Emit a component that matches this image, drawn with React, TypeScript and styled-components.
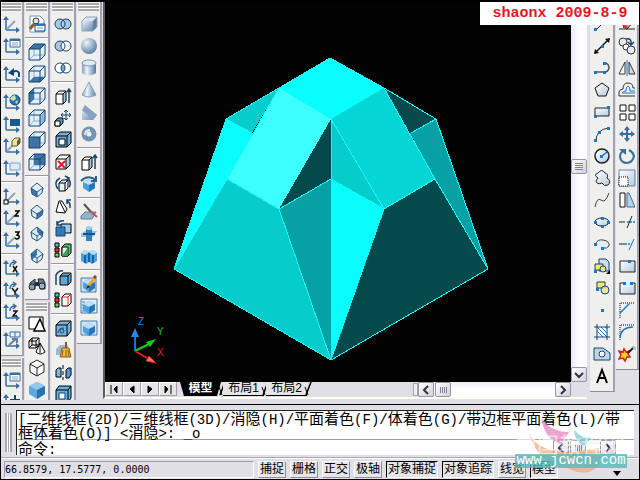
import React from "react";
import styled, { createGlobalStyle } from "styled-components";

const ink = "#17456f";
const blue = "#3a6d9f";
const sky = "#4aa3e0";

const GlobalStyle = createGlobalStyle`
  * { box-sizing: border-box; }
  body { margin: 0; background: #e0dfe6; }
  button { font: inherit; color: inherit; margin: 0; }
`;

const Page = styled.div`
  position: relative;
  display: flex;
  flex-direction: column;
  height: 100vh;
  overflow: hidden;
  background: #e0dfe6;
  border: solid #000;
  border-width: 2px 1px 1px;
  font-family: "Liberation Sans", "Noto Sans CJK SC", sans-serif;
  font-size: 12px;
  color: #000;
`;

const Workspace = styled.main`
  display: flex;
  flex: 1;
  min-height: 0;
  overflow: hidden;
`;

const Dock = styled.div<{ $right?: boolean }>`
  display: flex;
  flex: none;
  gap: 1px;
  padding-left: ${(p) => (p.$right ? 3 : 0)}px;
`;

const DockColumn = styled.div<{ $width: number }>`
  display: flex;
  flex-direction: column;
  gap: 2px;
  width: ${(p) => p.$width}px;
`;

const Bar = styled.div`
  flex: none;
  display: flex;
  flex-direction: column;
  padding-bottom: 4px;
  background: #efefed;
  border-right: 2px solid #a3a0b1;
  border-bottom: 1px solid #8f8c9c;
`;

const Grip = styled.div`
  height: 8px;
  margin: 1px 1px 2px;
  border: solid #a9a9ab;
  border-width: 2px 0;
  background: linear-gradient(#fff 0 1px, #a9a9ab 1px 3px, #fff 3px);
`;

const Tool = styled.button`
  display: flex;
  align-items: center;
  justify-content: center;
  height: 22px;
  padding: 0;
  border: 0;
  background: none;
`;

const Rule = styled.hr`
  width: 100%;
  height: 2px;
  margin: 2px 0;
  border: 0;
  border-top: 1px solid #98989c;
  border-bottom: 1px solid #fff;
`;

const Drawing = styled.section`
  display: flex;
  flex: 1;
  min-width: 0;
  margin-left: 1px;
  margin-bottom: 1px;
  border-left: 2px solid #5b5b5b;
  border-bottom: 2px solid #fffff6;
`;

const Canvas = styled.div`
  display: flex;
  flex-direction: column;
  flex: 1;
  min-width: 0;
`;

const Model = styled.svg`
  display: block;
  flex: 1;
  width: 100%;
  min-height: 0;
  background: #030203;
`;

const Sheets = styled.nav`
  display: flex;
  align-items: flex-start;
  height: 15px;
`;

const SheetSteps = styled.div`
  display: flex;
  margin-right: 3px;
`;

const SheetStep = styled.button`
  width: 18px;
  height: 14px;
  padding: 0;
  display: flex;
  align-items: center;
  justify-content: center;
  background: #e6e5e6;
  border: 1px solid;
  border-color: #fff #a09ead #a09ead #fff;
`;

const SheetTab = styled.button<{ $active?: boolean }>`
  width: 41px;
  height: 14px;
  padding: 0;
  border: 0;
  border-bottom: 1px solid #000;
  line-height: 13px;
  font-size: 12px;
  white-space: nowrap;
  font-weight: ${(p) => (p.$active ? 700 : 400)};
  color: ${(p) => (p.$active ? "#fff" : "#000")};
  background: ${(p) => (p.$active ? "#000" : "#e6e5e6")};
  clip-path: ${(p) => (p.$active ? "polygon(0 0, 100% 0, calc(100% - 4px) 100%, 4px 100%)" : "none")};
`;

const TabEdge = styled.svg`
  flex: none;
  margin: 0 -3px;
`;

const ScrollRow = styled.div`
  display: flex;
  align-items: center;
  margin-left: auto;
  width: 158px;
  height: 15px;
`;

const Splitter = styled.div`
  width: 5px;
  height: 13px;
  border: 1px solid #a9a6b4;
  background: #efeeea;
`;

const Track = styled.div<{ $vertical?: boolean }>`
  display: flex;
  flex: 1;
  align-self: stretch;
  flex-direction: ${(p) => (p.$vertical ? "column" : "row")};
  justify-content: ${(p) => (p.$vertical ? "center" : "flex-start")};
  background: ${(p) => (p.$vertical ? "linear-gradient(90deg, #e9e8f2, #fdfdff 50%)" : "linear-gradient(#eeedf4, #fff 50%)")};
  padding: ${(p) => (p.$vertical ? "0 0 37px" : "0 1px")};
`;

const ScrollButton = styled.button`
  flex: none;
  display: flex;
  align-items: center;
  justify-content: center;
  width: 16px;
  height: 15px;
  padding: 0;
  border: 1px solid #9896a7;
  border-radius: 2px;
  background: linear-gradient(135deg, #fff, #d0cfdc);
`;

const VerticalScroll = styled.div`
  display: flex;
  flex-direction: column;
  width: 16px;
  flex: none;
  padding-bottom: 15px;
`;

const CommandPanel = styled.section`
  flex: none;
  display: flex;
  margin-top: 4px;
  padding: 5px 5px 2px 4px;
  border-top: 1px solid #000;
  border-bottom: 1px solid #aaa8b3;
`;

const CommandGrip = styled.div`
  width: 7px;
  margin: 3px 4px 3px 0;
  border: solid #a9a8b0;
  border-width: 0 2px;
  background: linear-gradient(90deg, #fff 0 1px, #a9a8b0 1px 2px, #fff 2px);
`;

const CommandText = styled.div`
  flex: 1;
  min-width: 0;
  border: solid #222;
  border-width: 1px 0 0 1px;
  background: #fff;
  font: 15px/14px "Noto Sans CJK SC", sans-serif;
`;

const History = styled.output`
  display: block;
  padding-left: 1px;
  word-break: break-all;
`;

const Latin = styled.span`
  font: 14px/1px "Liberation Mono", monospace;
`;

const Prompt = styled.label`
  display: flex;
  align-items: center;
  height: 16px;
  padding-left: 1px;
  border-top: 1px solid #a09fa6;
`;

const PromptInput = styled.input`
  flex: 1;
  min-width: 0;
  height: 14px;
  padding: 0;
  border: 0;
  outline: 0;
  background: none;
  font: 14px/14px "Liberation Mono", monospace;
`;

const PromptScroll = styled.div`
  display: flex;
  width: 63px;
  margin-right: 18px;
`;

const Status = styled.footer`
  flex: none;
  display: flex;
  align-items: center;
  gap: 4px;
  height: 21px;
  padding: 0 3px;
  border-top: 1px solid #fff;
`;

const Coordinates = styled.output`
  width: 250px;
  min-width: 0;
  height: 17px;
  border: 1px solid;
  border-color: #a09ead #fff #fff #a09ead;
  font: 10px/15px "DejaVu Sans Mono", monospace;
  white-space: nowrap;
`;

const Mode = styled.button<{ $on?: boolean }>`
  flex: none;
  height: 17px;
  padding: 0 1px;
  border: 1px solid;
  border-color: ${(p) => (p.$on ? "#000 #fff #fff #000" : "#fff #8f8d9b #8f8d9b #fff")};
  background: #e6e5e8;
  font-size: 12px;
  line-height: 15px;
`;

const StatusMenu = styled.button`
  margin-left: auto;
  margin-right: 15px;
  padding: 6px 0 0;
  border: 0;
  background: none;
`;

const Stamp = styled.div`
  position: absolute;
  top: -2px;
  right: -1px;
  width: 160px;
  height: 25px;
  background: #fff;
  color: #e8141c;
  text-align: center;
  font: bold 15px/28px "Liberation Mono", monospace;
`;

const Watermark = styled.div`
  position: absolute;
  right: 12px;
  bottom: 11px;
  width: 112px;
  height: 52px;
  pointer-events: none;
`;

const Swoosh = styled.svg`
  display: block;
  position: absolute;
  top: 0;
  left: 0;
`;

const SiteName = styled.div`
  position: absolute;
  top: 15px;
  left: 0;
  color: #ffffffa0;
  font: 22px/24px "Noto Sans CJK SC", sans-serif;
  white-space: nowrap;
`;

const SiteLink = styled.a`
  position: absolute;
  left: 0;
  right: 0;
  bottom: 0;
  height: 14px;
  background: #55bcbcd0;
  color: #fff;
  text-decoration: none;
  text-align: center;
  font: 14px/13px "Liberation Mono", monospace;
`;

type Face = "top" | "bottom" | "left" | "right" | "front" | "back";
const faces: Record<Face, string> = {
  top: "1,6 6,1 17,1 12,6",
  bottom: "1,17 6,12 17,12 12,17",
  left: "1,6 6,1 6,12 1,17",
  right: "12,6 17,1 17,12 12,17",
  front: "1,6 12,6 12,17 1,17",
  back: "6,1 17,1 17,12 6,12",
};

const viewCube = (face: Face) => (
  <>
    <path d="M1 6L6 1H17V12L12 17H1Z" fill="#e3eff7" />
    <path d="M6 1V12H17M6 12L1 17" stroke="#8cb0cf" fill="none" />
    <polygon points={faces[face]} fill={face === "right" ? "#8dbbe0" : "#3c73a8"} />
    <path d="M1 6L6 1H17V12L12 17H1ZM1 6H12V17M12 6L17 1" fill="none" stroke={ink} />
  </>
);

const isoCube = (fill: string) => (
  <>
    <path d="M9 2L15 7L14 12L9 16L4 13L3 7Z" fill="#dcebf5" />
    <polygon points={fill} fill="#3d77ad" />
    <path d="M9 2L15 7L14 12L9 16L4 13L3 7ZM3 7L9 11L15 7M9 11V16" fill="none" stroke="#24577f" />
  </>
);

const box = (
  <>
    <path d="M2 6L6 2H16V12L12 16H2Z" fill="#fff" />
    <path d="M12 6L16 2V12L12 16Z" fill="#a9cce8" />
    <path d="M2 6L6 2H16V12L12 16H2ZM2 6H12V16M12 6L16 2" fill="none" stroke="#000" />
  </>
);

const smallBox = (
  <>
    <path d="M2 7L5 4H12V14L9 17H2Z" fill="#fff" />
    <path d="M9 7L12 4V14L9 17Z" fill="#9ec5e4" />
    <path d="M2 7L5 4H12V14L9 17H2ZM2 7H9V17M9 7L12 4" fill="none" stroke="#000" />
  </>
);

const blueBox = (
  <>
    <path d="M3 7L9 4L15 7V13L9 17L3 13Z" fill={sky} />
    <path d="M3 7L9 4L15 7L9 10Z" fill="#bfe0f8" />
    <path d="M9 10L15 7V13L9 17Z" fill="#2577b8" />
  </>
);

const axes = (
  <>
    <path d="M3 15V4M3 15H15" stroke={blue} strokeWidth="1.5" fill="none" />
    <path d="M3 1L6 5H0ZM17 15L13 12V18Z" fill={blue} />
  </>
);
const axesDiagonal = (
  <>
    {axes}
    <path d="M4 14L12 6" stroke="#8da6bd" strokeWidth="2" />
  </>
);

const windowMark = (
  <>
    <path d="M7 2H17V10H7Z" fill="#fff" stroke={blue} />
    <path d="M7 2H17V4H7Z" fill={blue} />
    <path d="M9 6H15M9 8H15" stroke="#80a3c3" />
  </>
);

const curl = <path d="M7 8Q7 3 12 3M10 1L13 3L10 6" fill="none" stroke={blue} strokeWidth="1.5" />;

const ring = (left: string, mid: string, right: string) => (
  <>
    <circle cx="6" cy="9" r="5" fill={left} />
    <circle cx="12" cy="9" r="5" fill={right} />
    <path d="M9 5Q5 9 9 13Q13 9 9 5Z" fill={mid} />
    <circle cx="6" cy="9" r="5" fill="none" stroke={ink} />
    <circle cx="12" cy="9" r="5" fill="none" stroke={ink} />
  </>
);

const dot = (x: number, y: number) => <rect x={x} y={y} width="3" height="3" fill="#1678c8" />;

const swatches = (
  <>
    <path d="M1 2H5V6H1Z" fill="#50b9c8" stroke="#000" />
    <path d="M1 7H5V11H1Z" fill="#e33" stroke="#000" />
    <path d="M1 12H5V16H1Z" fill="#7bc06c" stroke="#000" />
  </>
);

const glyphs: Record<string, React.ReactNode> = {
  ucs: axesDiagonal,
  ucsWindow: <>{axes}{windowMark}</>,
  ucsPrevious: <>{axes}<path d="M16 12V8Q14 4 8 8" stroke={ink} strokeWidth="2" fill="none" /><path d="M5 8L11 3V11Z" fill={ink} /></>,
  ucsWorld: <>{axes}<circle cx="12" cy="7" r="5" fill="#2c73ad" stroke={ink} /><path d="M9 3L12 2L13 6L10 8L7 6ZM12 9L15 7L14 11Z" fill="#c4e0c0" /></>,
  ucsObject: <>{axes}<path d="M7 4H17V11H7Z" fill="#19598c" /></>,
  ucsFace: <>{axesDiagonal}<path d="M9 4L12 1H17V6L14 9H9Z" fill="#efe598" stroke="#625b32" /><path d="M14 4L17 1V6L14 9Z" fill="#625b32" /></>,
  ucsView: <>{axes}<path d="M7 4H17V11H7Z" fill="#dcebf7" stroke="#7ba4c8" /></>,
  ucsOrigin: <>{axesDiagonal}<rect x="1" y="13" width="4" height="4" fill="#fff" stroke="#000" /></>,
  ucsZ: <>{axesDiagonal}<path d="M12 2H16L12 7H16" stroke="#000" strokeWidth="1.5" fill="none" /></>,
  ucs3: <>{axesDiagonal}<path d="M12 1H16L14 4Q17 4 16 7Q14 9 12 7" stroke="#000" strokeWidth="1.5" fill="none" /></>,
  rotX: <>{axes}{curl}<path d="M10 7L14 13M14 7L10 13" stroke="#111" strokeWidth="1.5" /></>,
  rotY: <>{axes}{curl}<path d="M9 7L12 11L15 7M12 11V14" stroke="#111" strokeWidth="1.5" fill="none" /></>,
  rotZ: <>{axes}{curl}<path d="M10 8H14L10 13H14" stroke="#111" strokeWidth="1.5" fill="none" /></>,
  ucsApply: <>{axes}<path d="M7 1H17V6H7ZM12 1V6" fill="#e5f0f8" stroke={blue} /><path d="M6 14L13 8M9 8H14V12" stroke="#62809d" strokeWidth="2" fill="none" /></>,
  ucsMove: <>{axes}<path d="M12 2V12M7 7H17" stroke={ink} strokeWidth="2" /></>,

  namedViews: <><path d="M2 1H12L16 5V17H2Z" fill="#fff" stroke="#7196b8" /><circle cx="8" cy="6" r="3" fill="#d3e4ef" stroke="#333" /><path d="M6 9L2 14" stroke="#8d5f26" strokeWidth="3" /><path d="M7 9H17V16H7Z" fill="#fff" stroke={ink} /><path d="M7 9H17V11H7Z" fill="#2873b9" /><path d="M9 13H15" stroke="#6f96ba" /></>,
  top: viewCube("top"),
  bottom: viewCube("bottom"),
  left: viewCube("left"),
  right: viewCube("right"),
  front: viewCube("front"),
  back: viewCube("back"),
  sw: isoCube("3,7 9,11 9,16 4,13"),
  se: isoCube("15,7 9,11 9,16 14,12"),
  ne: isoCube("9,2 15,7 14,12 9,7"),
  nw: isoCube("9,2 3,7 4,13 9,8"),
  camera: <><path d="M2 8L7 4V14H2ZM10 4H15L17 8V14H12Z" fill="#67788a" stroke="#20282f" /><circle cx="4" cy="12" r="3" fill="#8c9cab" stroke="#20282f" /><circle cx="14" cy="11" r="3" fill="#9fb5c7" stroke="#20282f" /><path d="M7 7H11V11H7Z" fill="#283038" /></>,
  wire2d: <><path d="M1 2H15V14H1Z" fill="#fff" stroke="#000" /><path d="M12 4L17 16H6Z" fill="#fff" stroke="#000" strokeWidth="1.5" /></>,
  wire3d: <><path d="M1 4L4 1H11V8L8 11H1ZM1 4H8V11M8 4L11 1M4 1V8H11M4 8L1 11" fill="none" stroke="#000" /><path d="M12 6L17 15Q12 19 8 15ZM12 6V16" fill="#fff" stroke="#000" /></>,
  hidden: <path d="M9 1L16 5V13L9 17L2 13V5ZM2 5L9 9L16 5M9 9V17" fill="#fff" stroke="#222" />,
  flat: <><path d="M1 5L9 1L17 5V13L9 18L1 13Z" fill="#62a7db" /><path d="M1 5L9 1L17 5L9 9Z" fill="#94c8ed" /><path d="M9 9L17 5V13L9 18Z" fill="#2774ae" /></>,

  union: ring("#a8c9e1", "#a8c9e1", "#a8c9e1"),
  subtract: ring("#a8c9e1", "#fff", "#fff"),
  intersect: ring("#fff", "#7ba8cc", "#fff"),
  extrudeFace: <>{smallBox}<path d="M15 16V3M13 5L15 2L17 5" stroke={ink} strokeWidth="1.5" fill="none" /></>,
  moveFace: <><path d="M1 12L4 9H9V14L6 17H1Z" fill="#4f9ad2" stroke="#000" /><path d="M1 12H6V17H1Z" fill="#fff" stroke="#000" /><path d="M12 1V11M7 6H17M10 3L12 1L14 3M10 9L12 11L14 9M9 4L7 6L9 8M15 4L17 6L15 8" stroke={ink} fill="none" /></>,
  offsetFace: <><path d="M2 5L6 1H17V12L13 16H2Z" fill="#72acd9" stroke="#000" /><path d="M2 5H13V16M13 5L17 1" fill="none" stroke="#000" /><path d="M5 8H11V14H5Z" fill="#fff" stroke="#000" /></>,
  deleteFace: <>{box}<path d="M4 8L11 15M11 8L4 15" stroke="#e31b23" strokeWidth="2" /></>,
  rotateFace: <><path d="M5 8L8 5H14V13L11 16H5Z" fill="#e3eef6" stroke="#000" /><path d="M5 8H11V16M11 8L14 5" fill="none" stroke="#000" /><path d="M4 14Q-1 7 6 3M14 3Q18 8 15 12M11 1L15 3L12 5" stroke={ink} strokeWidth="1.5" fill="none" /></>,
  taperFace: <><path d="M2 15L5 4H8L13 12L11 16Z" fill="#fff" stroke="#000" /><path d="M6 5L11 15" stroke="#000" /><path d="M16 11Q17 6 13 4M13 7V3H17" stroke={ink} strokeWidth="1.5" fill="none" /></>,
  copyFace: <><path d="M7 5H17V14H7Z" fill="#9cc9eb" stroke="#000" /><path d="M2 8H11V17H2Z" fill="#337ab8" stroke={ink} /><path d="M3 6Q5 1 10 2M3 2V6H7" stroke={ink} strokeWidth="1.5" fill="none" /></>,
  colorFace: <>{swatches}<path d="M8 6L11 3H17V12L14 15H8Z" fill="#5ac47c" stroke="#000" /><path d="M8 6H14V15H8Z" fill="#dff2e4" stroke="#000" /><path d="M14 6V15H8Z" fill="#30a558" /></>,
  copyEdge: <><path d="M6 7L9 4H17V13L14 16H6Z" fill="#61a7de" stroke="#000" /><path d="M6 7H14V16M14 7L17 4" stroke="#000" fill="none" /><path d="M2 16V6Q5 1 9 2" stroke={ink} strokeWidth="1.5" fill="none" /></>,
  colorEdge: <>{swatches}<path d="M8 6L11 3H17V12L14 15H8Z" fill="#fff" stroke="#000" /><path d="M8 6H14V15M14 6L17 3" fill="none" stroke="#e31b23" /></>,
  imprint: <><path d="M2 6L6 2H17V12L13 17H2Z" fill="#77b2de" stroke="#000" /><path d="M2 6H13V17M13 6L17 2" stroke="#000" fill="none" /><path d="M4 14Q4 9 10 9" stroke={ink} fill="none" /><circle cx="8" cy="12" r="2" fill="none" stroke={ink} /></>,
  clean: <><path d="M2 8L6 4H14V14H2Z" fill="#9ab9d5" /><path d="M11 1H13V7H11Z" fill="#8c5624" /><path d="M8 7H15L17 16H6Z" fill="#edb641" stroke="#936018" /><path d="M9 9L8 16M12 9V16M14 9L15 16" stroke="#936018" /></>,
  separate: <><path d="M2 7L4 5H7V14H2Z" fill="#81b7e0" stroke="#000" /><path d="M12 7L14 5H17V12L15 15H12Z" fill="#4f9bd5" stroke="#000" /><path d="M9 2V6M9 8V12M9 14V17" stroke="#000" /></>,
  shell: <><path d="M2 5L5 1H17V13L14 17H2Z" fill="#65aee6" stroke="#000" /><path d="M2 5H14V17M14 5L17 1" stroke="#000" fill="none" /><path d="M5 8H11V14H5Z" fill="#fff" stroke={ink} /></>,

  box: <><path d="M2 6L6 2H17V12L13 16H2Z" fill="#5d7fa3" /><path d="M2 6L6 2H17L13 6Z" fill="#d9e6f1" /><path d="M2 6H13V16H2Z" fill="url(#steel)" /><path d="M2 6L6 2H17V12L13 16H2Z" stroke="#8ba5bf" fill="none" /></>,
  sphere: <circle cx="9" cy="9" r="8" fill="url(#ball)" />,
  cylinder: <><path d="M2 4V14Q9 19 16 14V4Z" fill="url(#tube)" /><ellipse cx="9" cy="4" rx="7" ry="3" fill="#e0ebf4" stroke="#7895b2" /></>,
  cone: <path d="M9 1L16 14Q9 18 2 14Z" fill="url(#tube)" stroke="#8aa4bd" />,
  wedge: <><path d="M2 7L5 2L17 12L13 17H2Z" fill="url(#steel)" /><path d="M2 7L5 2L17 12L13 17Z" fill="#86a3c0" /></>,
  torus: <><circle cx="9" cy="9" r="5" fill="none" stroke="#7393b4" strokeWidth="5" /><path d="M5 10Q5 5 10 5" fill="none" stroke="#e5eff7" strokeWidth="2" /></>,
  extrude: <>{smallBox}<path d="M15 16V3M13 5L15 2L17 5" stroke={ink} strokeWidth="1.5" fill="none" /></>,
  revolve: <>{blueBox}<path d="M1 6Q8 -1 16 5M16 1V6H11" stroke="#246291" fill="none" strokeWidth="2" /></>,
  slice: <><path d="M1 13L5 9H16L12 16H1Z" fill="#96b2cc" stroke="#5e7f9f" /><path d="M4 1L11 9" stroke="#555" strokeWidth="2" /><path d="M10 8L17 14" stroke="#c05050" strokeWidth="2" /></>,
  section: <><path d="M1 9L5 6H17L13 12H1Z" fill="#8cc2e8" /><path d="M6 2H12V16H6Z" fill="#2c80bf" /><ellipse cx="9" cy="3" rx="3" ry="2" fill="#9ed0f2" /><path d="M3 9H15" stroke="#145589" strokeWidth="2" /></>,
  interfere: <><path d="M1 6L5 3L9 5L13 3L17 6V14L12 17L9 15L6 17L1 14Z" fill={sky} /><path d="M5 8V16M9 6V15M13 8V16" stroke="#1563a0" strokeWidth="2" /><path d="M1 6L5 3L9 5L5 8ZM9 5L13 3L17 6L13 8Z" fill="#b8def6" /></>,
  setDraw: <><path d="M1 3H16V17H1Z" fill="#cde2f2" stroke="#4f7da5" />{blueBox}<path d="M8 11L15 3" stroke="#eda72e" strokeWidth="3" /><path d="M14 3L16 1" stroke="#7d4b24" strokeWidth="3" /><path d="M6 14L8 10L10 12Z" fill="#222" /></>,
  setView: <><path d="M1 2H17V16H1Z" fill="#e1edf6" stroke="#4f7da5" /><path d="M2 5H5M2 8H5M2 11H5M2 14H5" stroke="#4f7da5" />{blueBox}</>,
  setProfile: <><path d="M1 2H17V16H1Z" fill="#d2e4f2" stroke="#4f7da5" />{blueBox}</>,

  line: <><path d="M3 15L15 3" stroke="#222" />{dot(1, 13)}{dot(13, 2)}</>,
  ray: <><path d="M2 16L16 2" stroke="#111" strokeWidth="1.5" /><path d="M1 17L2 12L6 16ZM17 1L12 2L16 6Z" fill="#111" />{dot(8, 8)}</>,
  pline: <><path d="M3 13H12M11 4Q16 4 16 9Q15 13 12 13" stroke="#555" fill="none" strokeWidth="1.5" />{dot(1, 12)}{dot(10, 12)}{dot(10, 3)}</>,
  polygon: <path d="M9 2L16 7L13 15H5L2 7Z" fill="url(#fade)" stroke="#111" />,
  rect: <><path d="M2 5H16V13H2Z" fill="url(#fade)" stroke="#222" />{dot(1, 12)}{dot(14, 3)}</>,
  arc: <><path d="M3 16Q3 5 15 3" stroke="#333" fill="none" />{dot(1, 14)}{dot(5, 6)}{dot(14, 2)}</>,
  circle: <><circle cx="9" cy="9" r="7" fill="url(#fade)" stroke="#222" strokeWidth="1.5" /><path d="M9 9L14 5" stroke="#1678c8" strokeWidth="1.5" />{dot(7, 8)}</>,
  cloud: <path d="M5 4Q9 -1 12 4Q16 5 14 9Q19 12 15 16Q11 18 9 14Q4 16 3 12Q4 10 5 9Q0 6 5 4Z" fill="url(#fade)" stroke="#222" />,
  spline: <path d="M2 16Q4 6 8 9Q12 13 16 2" stroke="#444" fill="none" />,
  ellipse: <><ellipse cx="9" cy="9" rx="7" ry="4" fill="url(#fade)" stroke="#222" />{dot(1, 8)}{dot(14, 8)}{dot(8, 4)}{dot(8, 12)}</>,
  ellipseArc: <><path d="M3 9Q4 4 10 5Q17 6 16 11Q14 14 10 13" fill="#e5edf4" stroke="#444" />{dot(1, 8)}{dot(8, 12)}</>,
  insert: <><path d="M6 2H13L16 5V14H6Z" fill="#cbdfee" stroke={ink} /><path d="M2 7H10V13H2Z" fill="#f4e96c" stroke={ink} /><circle cx="10" cy="12" r="3" fill="#e3e788" stroke={ink} /><path d="M13 17H17V13Z" fill="#000" />{dot(1, 13)}</>,
  block: <><path d="M4 3H12V9H4Z" fill="#f4e96c" stroke={ink} /><circle cx="12" cy="11" r="4" fill="#e3e788" fillOpacity=".8" stroke={ink} />{dot(3, 9)}</>,
  point: dot(8, 8),
  hatch: <><path d="M4 4H14V14H4Z" fill="#fff" /><path d="M4 8L10 14M4 4L14 14M8 4L14 10M12 4L14 6" stroke="#2878b4" /><path d="M4 1V17M14 1V17M1 4H17M1 14H17" stroke={ink} /></>,
  region: <><path d="M1 3H10L17 8V15H1Z" fill="#bcd4e8" stroke={ink} /><circle cx="9" cy="9" r="3" fill="#fff" stroke={ink} /></>,
  text: <path d="M4 16L9 3L14 16M5 11H13" stroke="#000" strokeWidth="2" fill="none" />,

  erase: <><path d="M1 14H17" stroke="#222" /><path d="M5 12L14 2L17 5L9 14Z" fill="#a6bed1" stroke="#222" /><path d="M4 10L7 8L10 12L8 14Z" fill="#e33" /></>,
  copy: <><circle cx="5" cy="5" r="4" fill="#e4edf4" stroke="#333" /><circle cx="8" cy="10" r="3" fill="#fff" stroke="#333" /><circle cx="13" cy="13" r="4" fill="#e4edf4" stroke="#333" /><path d="M8 2Q14 1 13 7M10 5L13 8L16 5" stroke={ink} strokeWidth="1.5" fill="none" /></>,
  mirror: <><path d="M7 3V15H1Z" fill="#fff" stroke="#333" /><path d="M11 3V15H17Z" fill="#cfdce7" stroke="#333" /><path d="M9 1V17" stroke="#1678c8" /></>,
  offset: <><path d="M17 15H1V11Q2 8 5 8Q5 2 10 2Q15 2 15 7H17" stroke="#333" fill="none" /><path d="M17 12H4Q5 10 8 10Q8 5 10 5Q12 5 12 10H17" stroke="#1678c8" fill="none" /></>,
  array: <path d="M2 2H8V8H2ZM11 2H17V8H11ZM2 11H8V17H2ZM11 11H17V17H11Z" fill="#fff" stroke="#111" />,
  move: <><path d="M9 2V16M2 9H16" stroke={blue} strokeWidth="2" /><path d="M9 1L12 5H6ZM9 17L12 13H6ZM1 9L5 6V12ZM17 9L13 6V12Z" fill={blue} /></>,
  rotate: <><path d="M5 4Q2 6 2 10Q3 16 9 16Q15 15 16 9Q15 5 11 3" stroke={blue} strokeWidth="2" fill="none" /><path d="M1 2H8V8Z" fill={blue} /></>,
  scale: <><path d="M1 1H17V17H1Z" fill="url(#fade)" stroke="#5b89b2" /><path d="M1 8H10V17H1Z" fill="#fff" stroke="#000" strokeDasharray="1 1" /></>,
  stretch: <><path d="M2 2H7V16H2Z" fill="#fff" stroke="#111" /><path d="M9 2V16H17L11 2Z" fill="#bbd1e4" stroke={blue} /></>,
  trim: <><path d="M1 9H7M9 15L14 3" stroke="#222" /><path d="M9 9H17" stroke="#1678c8" strokeWidth="1.5" strokeDasharray="2 1" /></>,
  extend: <><path d="M1 9H7" stroke="#222" /><path d="M11 15L16 4" stroke="#1678c8" /><path d="M7 9H14" stroke="#1678c8" strokeWidth="1.5" strokeDasharray="2 1" /></>,
  breakPoint: <><path d="M2 4H17V15H2Z" fill="url(#fade)" stroke="#222" />{dot(10, 3)}</>,
  breakTwo: <><path d="M6 4H2V15H17V4H13" fill="url(#fade)" stroke="#222" />{dot(5, 3)}{dot(12, 3)}</>,
  chamfer: <><path d="M2 17V2H17" stroke="#000" strokeDasharray="1 1" fill="none" /><path d="M2 12L11 3" stroke="#1678c8" strokeWidth="1.5" /></>,
  fillet: <><path d="M2 17V2H17" stroke="#000" strokeDasharray="1 1" fill="none" /><path d="M2 15Q3 4 15 4" stroke="#1678c8" strokeWidth="1.5" fill="none" /></>,
  explode: <><path d="M6 4L8 7L11 6L10 9L12 12L9 12L7 16L5 13L1 14L3 10L1 6L5 7Z" fill="#f2cf27" stroke="#c92820" strokeWidth="1.5" /><path d="M10 8L15 3" stroke="#222" strokeWidth="2" /><path d="M14 2H17V5" stroke="#73a3ca" fill="none" /></>,
};

const Glyph = ({ name }: { name: string }) => (
  <svg width="18" height="18" viewBox="0 0 18 18" fill="none" aria-hidden="true">
    {glyphs[name]}
  </svg>
);

const ToolBar = ({ label, items }: { label: string; items: string }) => (
  <Bar role="toolbar" aria-label={label}>
    <Grip />
    {items.split(" ").map((item, i) =>
      item === "|" ? (
        <Rule key={i} />
      ) : (
        <Tool key={i} aria-label={item}>
          <Glyph name={item} />
        </Tool>
      )
    )}
  </Bar>
);

const chevrons = {
  left: "M7 1L3 5L7 9",
  right: "M3 1L7 5L3 9",
  down: "M1 3L5 7L9 3",
};

const Arrow = ({ to }: { to: keyof typeof chevrons }) => (
  <ScrollButton aria-label={`scroll ${to}`}>
    <svg width="10" height="10" viewBox="0 0 10 10">
      <path d={chevrons[to]} fill="none" stroke="#333" strokeWidth="2" />
    </svg>
  </ScrollButton>
);

const Thumb = ({ vertical }: { vertical?: boolean }) => (
  <ScrollButton aria-label="scroll thumb">
    <svg width="8" height="8" viewBox="0 0 8 8">
      <path
        d={vertical ? "M0 1H8M0 3H8M0 5H8M0 7H8" : "M1 1V7M3 1V7M5 1V7M7 1V7"}
        stroke="#8582a0"
        shapeRendering="crispEdges"
      />
    </svg>
  </ScrollButton>
);

const Mixed = ({ text }: { text: string }) => (
  <>
    {text.split(/([^\u4e00-\u9fff]+)/).map((part, i) => (i % 2 ? <Latin key={i}>{part}</Latin> : part))}
  </>
);

const steps: [string, string][] = [
  ["first", "M2 0V9M8 1V8L5 4Z"],
  ["previous", "M7 1V8L3 4Z"],
  ["next", "M3 1V8L7 4Z"],
  ["last", "M8 0V9M2 1V8L5 4Z"],
];

const Edge = () => (
  <TabEdge width="8" height="14" viewBox="0 0 8 14">
    <path d="M7 0L2 13" stroke="#000" strokeWidth="1.5" />
    <path d="M1 5L4 13" stroke="#000" />
  </TabEdge>
);

const solid: [string, string][] = [
  ["279,88 226,119 252,133", "#06cccc"],
  ["226,119 253,133 228,179 174,269", "#08fdfd"],
  ["384,88 436,119 410,133", "#044a4c"],
  ["436,119 410,133 435,179 488,269", "#05a1a4"],
  ["330,58 384,88 331,119 279,88", "#08fdfd"],
  ["279,88 331,119 279,209 227,179", "#3dffff"],
  ["384,88 435,179 384,209 331,119", "#06d5d5"],
  ["331,119 331,179 279,209", "#044a4c"],
  ["331,119 384,209 331,179", "#06cccc"],
  ["227,179 279,209 331,360 174,269", "#06cccc"],
  ["279,209 331,179 331,360", "#05a1a4"],
  ["331,179 384,209 331,360", "#08fdfd"],
  ["384,209 435,179 488,269 331,360", "#044a4c"],
];

const modes: [string, boolean][] = [
  ["捕捉", false],
  ["栅格", false],
  ["正交", false],
  ["极轴", false],
  ["对象捕捉", true],
  ["对象追踪", true],
  ["线宽", false],
  ["模型", true],
];

export default function App() {
  return (
    <>
      <GlobalStyle />
      <Page>
        <Workspace>
          <Dock>
            <DockColumn $width={23}>
              <ToolBar label="UCS" items="ucs ucsWindow | ucsPrevious | ucsWorld ucsObject ucsFace ucsView | ucsOrigin ucsZ ucs3 | rotX rotY rotZ | ucsApply" />
              <ToolBar label="UCS II" items="ucsWindow ucsMove" />
            </DockColumn>
            <DockColumn $width={25}>
              <ToolBar label="视图" items="namedViews | top bottom left right front back | sw se ne nw | camera" />
              <ToolBar label="着色" items="wire2d wire3d hidden flat" />
            </DockColumn>
            <DockColumn $width={25}>
              <ToolBar label="实体编辑" items="union subtract intersect | extrudeFace moveFace offsetFace deleteFace rotateFace taperFace copyFace colorFace | copyEdge colorEdge | imprint clean separate shell" />
            </DockColumn>
            <DockColumn $width={25}>
              <ToolBar label="实体" items="box sphere cylinder cone wedge torus | extrude revolve | slice section interfere | setDraw setView setProfile" />
            </DockColumn>
          </Dock>

          <Drawing>
            <Canvas>
              <Model viewBox="105 2 466 380" role="img" aria-label="model">
                <defs>
                  <linearGradient id="steel" x1="0" y1="0" x2="1" y2="1">
                    <stop offset="0" stopColor="#eef5fb" />
                    <stop offset="1" stopColor="#5f84ab" />
                  </linearGradient>
                  <linearGradient id="tube">
                    <stop offset="0" stopColor="#7f9fbe" />
                    <stop offset=".35" stopColor="#eef5fb" />
                    <stop offset="1" stopColor="#56799f" />
                  </linearGradient>
                  <linearGradient id="fade" x1="0" y1="0" x2="1" y2="1">
                    <stop offset="0" stopColor="#fff" />
                    <stop offset="1" stopColor="#b5cade" />
                  </linearGradient>
                  <radialGradient id="ball" cx=".35" cy=".3" r=".75">
                    <stop offset="0" stopColor="#eef5fb" />
                    <stop offset="1" stopColor="#55799f" />
                  </radialGradient>
                </defs>
                {solid.map(([points, fill]) => (
                  <polygon key={points} points={points} fill={fill} shapeRendering="crispEdges" />
                ))}
                <path
                  d="M330 58L384 88L436 119L488 269L331 360L174 269L226 119L279 88ZM279 88L227 179L174 269M384 88L435 179L488 269M226 119L252 133M436 119L411 133M331 119V360M279 209L331 360L384 209M331 119L384 209M227 179L279 209L331 179L384 209L435 179"
                  fill="none"
                  stroke="#19f6f6"
                  shapeRendering="crispEdges"
                />
                <path d="M135 351V335" stroke="#1675d0" strokeWidth="2" />
                <path d="M135 328L139 337H131Z" fill="#2189e5" />
                <path d="M135 351L149 344" stroke="#10d010" strokeWidth="2" />
                <path d="M156 339L146 342L150 347Z" fill="#10d010" />
                <path d="M135 351L147 358" stroke="#e81c1c" strokeWidth="2" />
                <path d="M156 363L149 356L146 361Z" fill="#f07070" stroke="#e81c1c" />
                <g fontFamily="Liberation Sans, sans-serif" fontSize="10">
                  <text x="138" y="325" fill="#2189e5">Z</text>
                  <text x="157" y="335" fill="#10c010">Y</text>
                  <text x="157" y="356" fill="#e81c1c">X</text>
                </g>
              </Model>
              <Sheets>
                <SheetSteps>
                  {steps.map(([name, d]) => (
                    <SheetStep key={name} aria-label={name}>
                      <svg width="10" height="9" viewBox="0 0 10 9">
                        <path d={d} fill="#000" stroke="#000" />
                      </svg>
                    </SheetStep>
                  ))}
                </SheetSteps>
                <SheetTab $active>模型</SheetTab>
                <Edge />
                <SheetTab>布局1</SheetTab>
                <Edge />
                <SheetTab>布局2</SheetTab>
                <Edge />
                <ScrollRow>
                  <Splitter />
                  <Arrow to="left" />
                  <Track><Thumb /></Track>
                  <Arrow to="right" />
                </ScrollRow>
              </Sheets>
            </Canvas>
            <VerticalScroll>
              <Track $vertical><Thumb vertical /></Track>
              <Arrow to="down" />
            </VerticalScroll>
          </Drawing>

          <Dock $right>
            <DockColumn $width={25}>
              <ToolBar label="绘图" items="line ray pline polygon rect arc circle cloud spline ellipse ellipseArc insert block point hatch region text" />
            </DockColumn>
            <DockColumn $width={23}>
              <ToolBar label="修改" items="erase copy mirror offset array move rotate scale stretch trim extend breakPoint breakTwo chamfer fillet explode" />
            </DockColumn>
          </Dock>
        </Workspace>

        <CommandPanel>
          <CommandGrip />
          <CommandText>
            <History>
              <Mixed text="[二维线框(2D)/三维线框(3D)/消隐(H)/平面着色(F)/体着色(G)/带边框平面着色(L)/带框体着色(O)] <消隐>: _o" />
            </History>
            <Prompt>
              <span><Mixed text="命令:" /></span>
              <PromptInput />
              <PromptScroll>
                <Arrow to="left" />
                <Track><Thumb /></Track>
                <Arrow to="right" />
              </PromptScroll>
            </Prompt>
          </CommandText>
        </CommandPanel>

        <Status>
          <Coordinates>66.8579, 17.5777, 0.0000</Coordinates>
          {modes.map(([name, on]) => (
            <Mode key={name} $on={on} aria-pressed={on}>{name}</Mode>
          ))}
          <StatusMenu aria-label="status menu">
            <svg width="8" height="5" viewBox="0 0 8 5"><path d="M0 0H8L4 5Z" /></svg>
          </StatusMenu>
        </Status>

        <Stamp>shaonx 2009-8-9</Stamp>
        <Watermark>
          <Swoosh width="112" height="60" viewBox="0 0 112 60">
            <path d="M26 2Q36 16 54 16L46 28Q30 24 26 2Z" fill="#e58fc4" fillOpacity=".8" />
            <path d="M59 14Q66 22 76 22L70 30Q60 26 59 14Z" fill="#85cfd0" fillOpacity=".8" />
            <path d="M14 17Q26 44 84 32L86 45Q76 64 52 52Q24 50 14 17Z" fill="#eaa679" fillOpacity=".7" />
          </Swoosh>
          <SiteName>中国教程网</SiteName>
          <SiteLink href="#">www.jcwcn.com</SiteLink>
        </Watermark>
      </Page>
    </>
  );
}
